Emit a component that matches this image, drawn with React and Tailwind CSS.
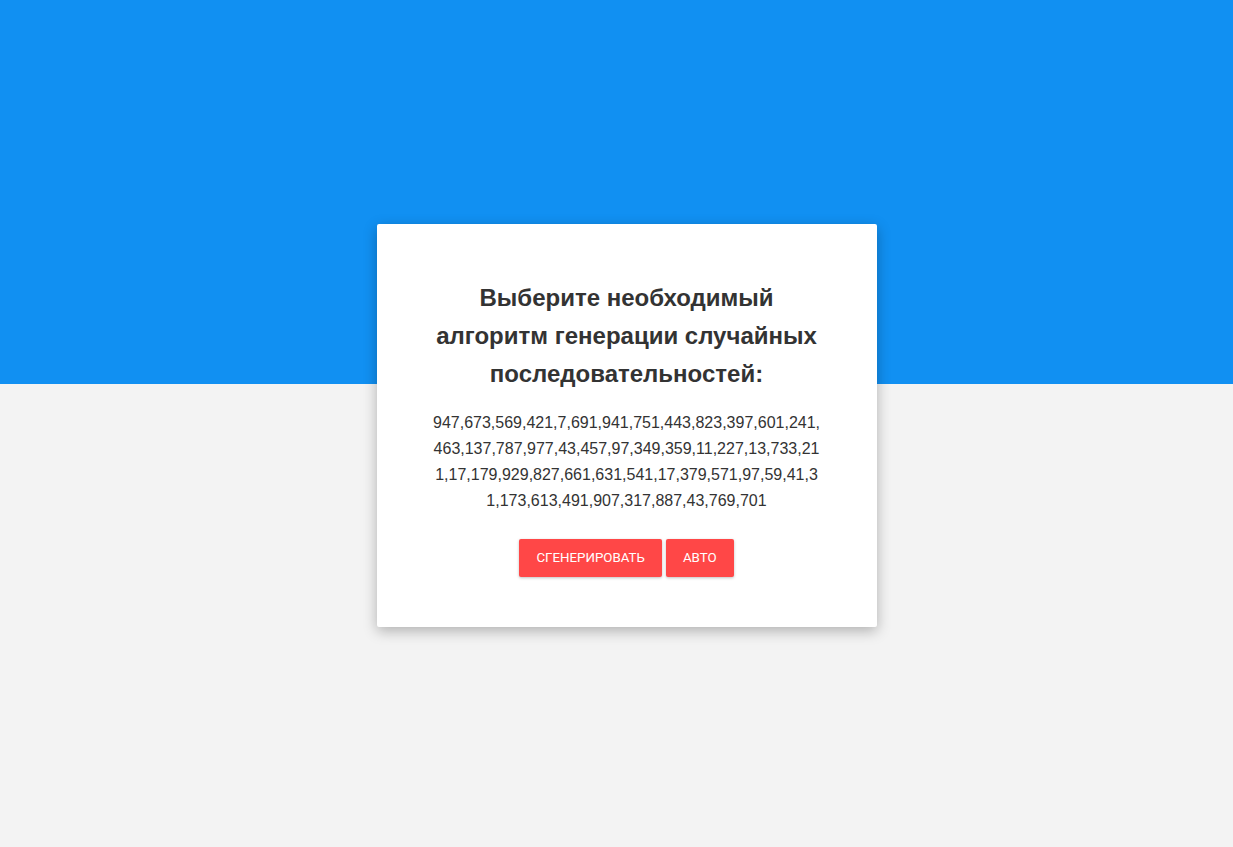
import React, { useState } from 'react';

const initial = '947,673,569,421,7,691,941,751,443,823,397,601,241,463,137,787,977,43,457,97,349,359,11,227,13,733,211,17,179,929,827,661,631,541,17,379,571,97,59,41,31,173,613,491,907,317,887,43,769,701';

const generate = () => {
    const out = [];
    for (let i = 0; i < 50; i++) {
        out.push(Math.floor(Math.random() * 500) * 2 + 1);
    }
    return out.join(',');
};

const App = () => {
    const [numbers, setNumbers] = useState(initial);

    return (
        <div className="min-h-screen bg-[linear-gradient(to_bottom,#1190f2_384px,#f3f3f3_384px)] pt-[224px] pl-[20px] font-['Liberation_Sans',Arial,sans-serif] text-[#333]">
            <div className="mx-auto w-[500px] bg-white rounded-[2px] shadow-[0_4px_14px_rgba(0,0,0,0.28)] px-[56px] pt-[55px] pb-[50px] text-center">
                <h1 className="text-[24px] font-bold leading-[38px]">
                    Выберите необходимый алгоритм генерации случайных последовательностей:
                </h1>
                <p className="mt-[17px] text-[16px] leading-[26px] break-all">
                    {numbers}
                </p>
                <div className="mt-[25px] flex justify-center gap-1 font-['Roboto',sans-serif]">
                    <button
                        onClick={() => setNumbers(generate())}
                        className="h-[38px] px-[17px] bg-[#ff4747] text-white text-[13.3px] uppercase rounded-[2px] shadow-[0_1px_3px_rgba(0,0,0,0.25)]"
                    >
                        Сгенерировать
                    </button>
                    <button
                        onClick={() => setNumbers(generate())}
                        className="h-[38px] px-[17px] bg-[#ff4747] text-white text-[13.3px] uppercase rounded-[2px] shadow-[0_1px_3px_rgba(0,0,0,0.25)]"
                    >
                        Авто
                    </button>
                </div>
            </div>
        </div>
    );
};

export default App;
